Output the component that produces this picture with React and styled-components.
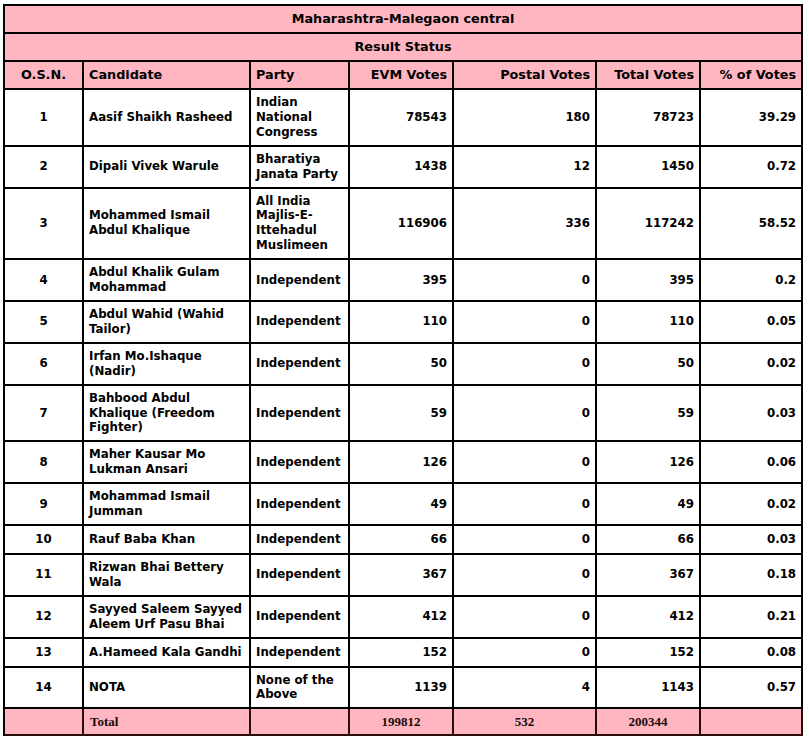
import React from "react";
import styled, { createGlobalStyle } from "styled-components";

const Global = createGlobalStyle`
  html, body { margin: 0; padding: 0; background: #fff; }
  body { font-family: "DejaVu Sans", Verdana, sans-serif; }
`;

const Page = styled.div`
  padding: 4px 0 0 3px;
`;

const Table = styled.table`
  border-collapse: separate;
  border-spacing: 0;
  table-layout: fixed;
  width: 800px;
  border-left: 2px solid #000;
  border-top: 2px solid #000;
  font-family: "DejaVu Sans", Verdana, sans-serif;
  font-weight: bold;
  font-size: 11.8px;
  color: #000;
`;

const Col = styled.col`
  width: ${(p) => p.$w}px;
`;

const Cell = styled.td`
  box-sizing: border-box;
  border-right: 2px solid #000;
  border-bottom: 2px solid #000;
  padding: 5px 5px;
  line-height: 14.9px;
  height: 29px;
  vertical-align: middle;
  text-align: ${(p) => p.$align || "left"};
  background: #fff;
`;

const HeadCell = styled(Cell).attrs({ as: "th" })`
  background: #ffb6c1;
  height: 28px;
  font-weight: bold;
  font-size: 12.8px;
  padding: 4px 5px;
`;

const TitleCell = styled(HeadCell)`
  text-align: center;
`;

const TotalCell = styled.td`
  box-sizing: border-box;
  background: #ffb6c1;
  border-right: 2px solid #2a0a0a;
  border-bottom: 2px solid #2a0a0a;
  height: 27px;
  padding: 2px 6px;
  font-family: "Liberation Serif", "Times New Roman", serif;
  font-weight: bold;
  font-size: 13px;
  color: #1a0a0a;
  text-align: ${(p) => p.$align || "center"};
`;

const rows = [
  ["1", "Aasif Shaikh Rasheed", "Indian National Congress", "78543", "180", "78723", "39.29"],
  ["2", "Dipali Vivek Warule", "Bharatiya Janata Party", "1438", "12", "1450", "0.72"],
  ["3", "Mohammed Ismail Abdul Khalique", "All India Majlis-E-Ittehadul Muslimeen", "116906", "336", "117242", "58.52"],
  ["4", "Abdul Khalik Gulam Mohammad", "Independent", "395", "0", "395", "0.2"],
  ["5", "Abdul Wahid (Wahid Tailor)", "Independent", "110", "0", "110", "0.05"],
  ["6", "Irfan Mo.Ishaque (Nadir)", "Independent", "50", "0", "50", "0.02"],
  ["7", "Bahbood Abdul Khalique (Freedom Fighter)", "Independent", "59", "0", "59", "0.03"],
  ["8", "Maher Kausar Mo Lukman Ansari", "Independent", "126", "0", "126", "0.06"],
  ["9", "Mohammad Ismail Jumman", "Independent", "49", "0", "49", "0.02"],
  ["10", "Rauf Baba Khan", "Independent", "66", "0", "66", "0.03"],
  ["11", "Rizwan Bhai Bettery Wala", "Independent", "367", "0", "367", "0.18"],
  ["12", "Sayyed Saleem Sayyed Aleem Urf Pasu Bhai", "Independent", "412", "0", "412", "0.21"],
  ["13", "A.Hameed Kala Gandhi", "Independent", "152", "0", "152", "0.08"],
  ["14", "NOTA", "None of the Above", "1139", "4", "1143", "0.57"],
];

const widths = [79, 167, 99, 104, 143, 104, 102];
const headers = [
  ["O.S.N.", "center"],
  ["Candidate", "left"],
  ["Party", "left"],
  ["EVM Votes", "right"],
  ["Postal Votes", "right"],
  ["Total Votes", "right"],
  ["% of Votes", "right"],
];
const aligns = ["center", "left", "left", "right", "right", "right", "right"];

export default function App() {
  return (
    <>
      <Global />
      <Page>
        <Table>
          <colgroup>
            {widths.map((w, i) => (
              <Col key={i} $w={w} />
            ))}
          </colgroup>
          <thead>
            <tr>
              <TitleCell colSpan={7}>Maharashtra-Malegaon central</TitleCell>
            </tr>
            <tr>
              <TitleCell colSpan={7}>Result Status</TitleCell>
            </tr>
            <tr>
              {headers.map(([h, a]) => (
                <HeadCell key={h} $align={a}>
                  {h}
                </HeadCell>
              ))}
            </tr>
          </thead>
          <tbody>
            {rows.map((r) => (
              <tr key={r[0]}>
                {r.map((c, i) => (
                  <Cell key={i} $align={aligns[i]}>
                    {c}
                  </Cell>
                ))}
              </tr>
            ))}
            <tr>
              <TotalCell />
              <TotalCell $align="left">Total</TotalCell>
              <TotalCell />
              <TotalCell>199812</TotalCell>
              <TotalCell>532</TotalCell>
              <TotalCell>200344</TotalCell>
              <TotalCell />
            </tr>
          </tbody>
        </Table>
      </Page>
    </>
  );
}
